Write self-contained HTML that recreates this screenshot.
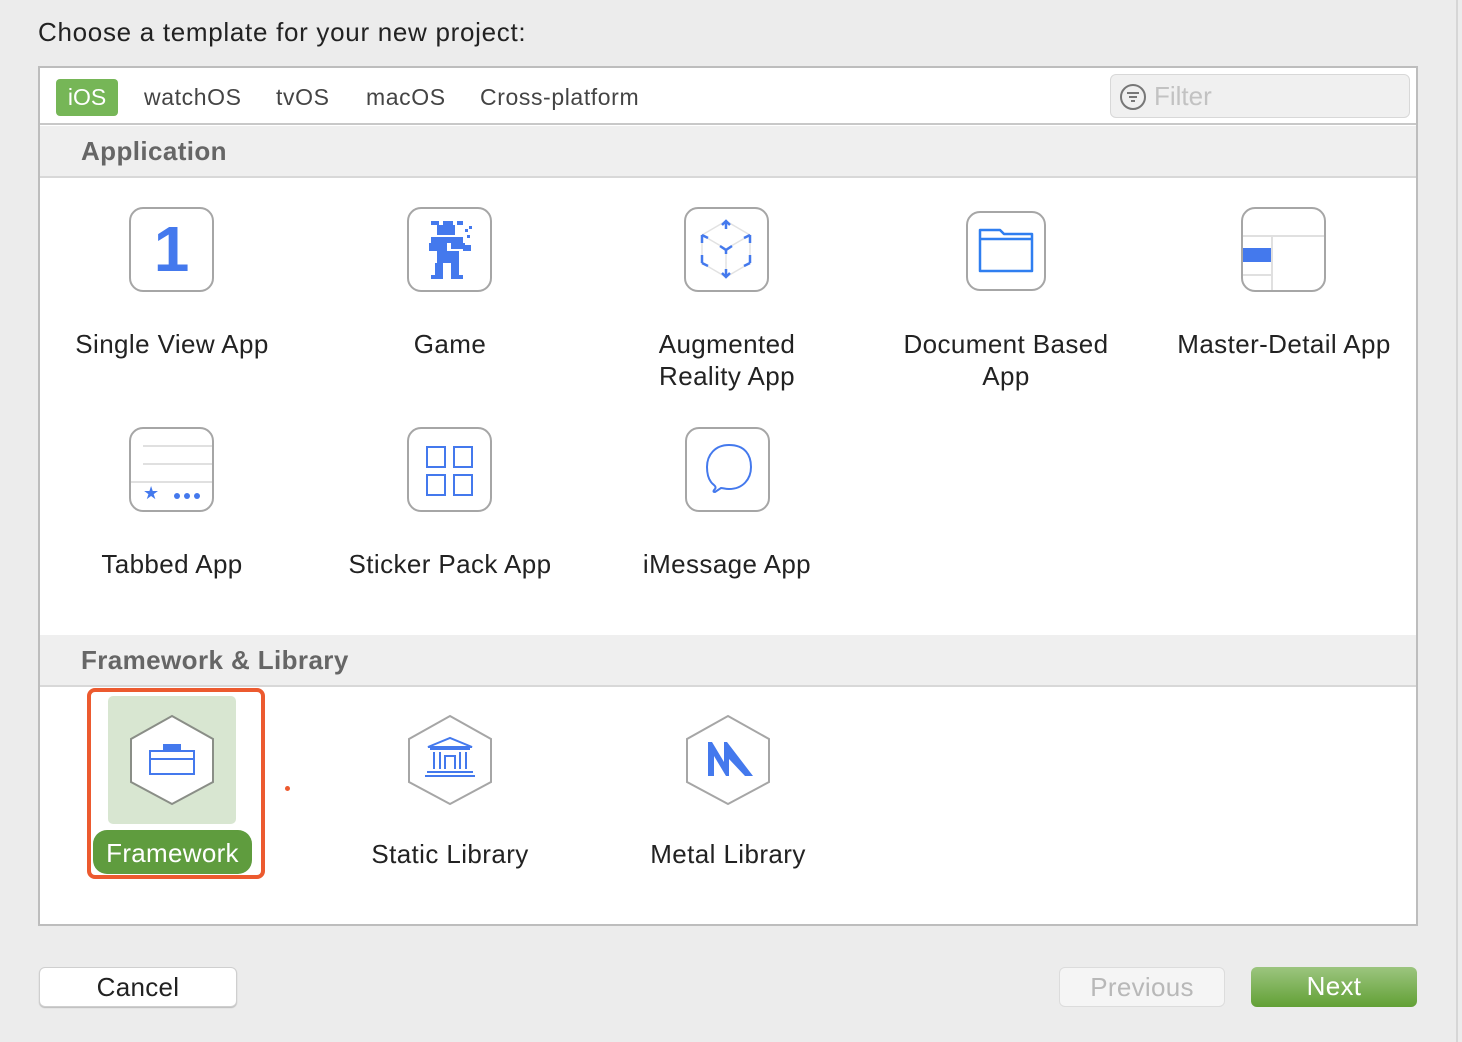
<!DOCTYPE html>
<html><head><meta charset="utf-8">
<style>
*{box-sizing:border-box;margin:0;padding:0}
body{width:1462px;height:1042px;background:#ececec;font-family:"Liberation Sans",sans-serif;position:relative;overflow:hidden;color:#222}
.abs{position:absolute}
.title{left:38px;top:17px;font-size:26px;letter-spacing:0.7px;color:#222}
.panel{left:38px;top:66px;width:1380px;height:860px;border:2px solid #bdbdbd;background:#fff}
.tabs{left:0;top:0;width:1376px;height:57px;border-bottom:2px solid #c8c8c8;background:#fff}
.tab{top:11px;height:37px;line-height:37px;font-size:23px;letter-spacing:0.6px;color:#444}
.hdr{left:0;width:1376px;height:52px;background:#efefef;border-bottom:2px solid #d8d8d8;font-size:26px;letter-spacing:0.4px;font-weight:bold;color:#666;padding-left:41px;line-height:50px}
.ico{width:85px;height:85px;border:2.5px solid #a6a6a6;border-radius:14px;background:#fff;overflow:hidden}
.lbl{width:260px;text-align:center;font-size:26px;letter-spacing:0.4px;line-height:32px;color:#222}
.btn{height:40px;border-radius:6px;font-size:26px;letter-spacing:0.3px;text-align:center;line-height:38px}
</style></head><body>
<div class="abs" style="left:1456px;top:0;width:2px;height:1042px;background:#d6d6d6"></div>
<div class="abs title">Choose a template for your new project:</div>
<div class="abs panel">
 <div class="abs tabs">
  <div class="abs tab" style="left:16px;width:62px;background:#76b657;color:#fff;border-radius:4px;text-align:center;letter-spacing:0">iOS</div>
  <div class="abs tab" style="left:104px">watchOS</div>
  <div class="abs tab" style="left:236px">tvOS</div>
  <div class="abs tab" style="left:326px">macOS</div>
  <div class="abs tab" style="left:440px">Cross-platform</div>
  <div class="abs" style="left:1070px;top:6px;width:300px;height:44px;background:#f0f0f0;border:1.5px solid #d8d8d8;border-radius:6px">
   <svg class="abs" style="left:8px;top:8px" width="28" height="28" viewBox="0 0 28 28"><circle cx="14" cy="14" r="12" fill="none" stroke="#777" stroke-width="2"/><path d="M8 10h12M10 14h8M12 18h4" stroke="#777" stroke-width="2"/></svg>
   <div class="abs" style="left:43px;top:6px;font-size:26px;color:#c2c2c2">Filter</div>
  </div>
 </div>
 <div class="abs hdr" style="top:58px">Application</div>
 <div class="abs hdr" style="top:567px">Framework &amp; Library</div>
</div>

<!-- row 1 icons -->
<div class="abs ico" style="left:129px;top:207px"><div style="font-size:64px;font-weight:bold;color:#4479ed;text-align:center;line-height:80px">1</div></div>
<div class="abs ico" style="left:407px;top:207px">
 <svg width="80" height="80" viewBox="0 0 80 80"><g fill="#4479ed">
 <rect x="22" y="12" width="8" height="4"/><rect x="34" y="12" width="10" height="4"/><rect x="48" y="12" width="6" height="4"/>
 <rect x="28" y="16" width="18" height="10"/><rect x="56" y="20" width="3" height="3"/><rect x="60" y="17" width="3" height="3"/><rect x="58" y="26" width="3" height="3"/>
 <rect x="22" y="28" width="32" height="6"/><rect x="20" y="34" width="18" height="8"/><rect x="42" y="34" width="14" height="6"/><rect x="54" y="36" width="8" height="6"/>
 <rect x="28" y="42" width="22" height="12"/><rect x="26" y="54" width="8" height="12"/><rect x="42" y="54" width="8" height="12"/>
 <rect x="22" y="66" width="12" height="4"/><rect x="42" y="66" width="12" height="4"/></g></svg>
</div>
<div class="abs ico" style="left:684px;top:207px">
 <svg width="80" height="80" viewBox="0 0 80 80"><g stroke="#e2e2e2" stroke-width="1.5" fill="none"><path d="M40 12L64 26V54L40 68L16 54V26Z M40 40V68 M40 40L16 26 M40 40L64 26"/></g>
 <g stroke="#4479ed" stroke-width="2.5" fill="none"><path d="M40 12v8M36 16l4-4 4 4M16 26v8M16 26l6 3M64 26v8M64 26l-6 3M16 54v-8M16 54l6 3M64 54v-8M64 54l-6 3M40 68v-8M36 64l4 4 4-4M34 37l6 4 6-4M40 41v4"/></g></svg>
</div>
<div class="abs ico" style="left:966px;top:211px;width:80px;height:80px">
 <svg width="76" height="76" viewBox="0 0 76 76"><path d="M12 17h20l4 4h28v37H12Z M12 26h52" fill="none" stroke="#2f7ef0" stroke-width="2.5" stroke-linejoin="round"/></svg>
</div>
<div class="abs ico" style="left:1241px;top:207px">
 <div class="abs" style="left:0;top:26px;width:85px;height:2px;background:#e0e0e0"></div>
 <div class="abs" style="left:28px;top:26px;width:2px;height:60px;background:#e0e0e0"></div>
 <div class="abs" style="left:0;top:39px;width:28px;height:14px;background:#4479ed"></div>
 <div class="abs" style="left:0;top:65px;width:28px;height:2px;background:#e0e0e0"></div>
</div>
<div class="abs lbl" style="left:42px;top:328px">Single View App</div>
<div class="abs lbl" style="left:320px;top:328px">Game</div>
<div class="abs lbl" style="left:597px;top:328px">Augmented<br>Reality App</div>
<div class="abs lbl" style="left:876px;top:328px">Document Based<br>App</div>
<div class="abs lbl" style="left:1154px;top:328px">Master-Detail App</div>

<!-- row 2 -->
<div class="abs ico" style="left:129px;top:427px">
 <div class="abs" style="left:12px;top:16px;width:70px;height:2px;background:#e0e0e0"></div>
 <div class="abs" style="left:12px;top:34px;width:70px;height:2px;background:#e0e0e0"></div>
 <div class="abs" style="left:0;top:52px;width:85px;height:2px;background:#e0e0e0"></div>
 <div class="abs" style="left:12px;top:54px;font-size:18px;color:#4479ed">★</div>
 <svg class="abs" style="left:42px;top:62px" width="30" height="10"><circle cx="4" cy="5" r="3" fill="#4479ed"/><circle cx="14" cy="5" r="3" fill="#4479ed"/><circle cx="24" cy="5" r="3" fill="#4479ed"/></svg>
</div>
<div class="abs ico" style="left:407px;top:427px">
 <svg width="80" height="80" viewBox="0 0 80 80"><g fill="none" stroke="#4479ed" stroke-width="2"><rect x="18" y="18" width="18" height="20"/><rect x="45" y="18" width="18" height="20"/><rect x="18" y="46" width="18" height="20"/><rect x="45" y="46" width="18" height="20"/></g></svg>
</div>
<div class="abs ico" style="left:685px;top:427px">
 <svg width="80" height="80" viewBox="0 0 80 80"><path d="M42 16c16 0 22 10 22 22s-8 22-22 22c-4 0-6-1-8-1l-6 4c-2 0-2-1 0-3 2-3-2-4-4-7-3-4-4-9-4-15 0-12 8-22 22-22Z" fill="none" stroke="#4479ed" stroke-width="2"/></svg>
</div>
<div class="abs lbl" style="left:42px;top:548px">Tabbed App</div>
<div class="abs lbl" style="left:320px;top:548px">Sticker Pack App</div>
<div class="abs lbl" style="left:597px;top:548px">iMessage App</div>

<!-- framework row -->
<div class="abs" style="left:87px;top:688px;width:178px;height:191px;border:4px solid #ec5a2f;border-radius:8px"></div>
<div class="abs" style="left:108px;top:696px;width:128px;height:128px;background:#d8e6d1;border-radius:5px"></div>
<svg class="abs" style="left:129px;top:714px" width="86" height="92" viewBox="0 0 86 92"><path d="M43 2L84 25V68L43 90L2 68V25Z" fill="#fff" stroke="#8a8e87" stroke-width="2"/>
<g fill="none" stroke="#4479ed" stroke-width="2"><rect x="21" y="37" width="44" height="23"/><path d="M21 45h44"/><rect x="35" y="31" width="16" height="6" fill="#4479ed"/></g></svg>
<div class="abs" style="left:93px;top:830px;width:159px;height:44px;background:#5f9c3e;border-radius:14px;color:#fff;font-size:26px;letter-spacing:0.3px;text-align:center;line-height:46px">Framework</div>
<div class="abs" style="left:285px;top:786px;width:5px;height:5px;border-radius:50%;background:#ec5a2f"></div>

<svg class="abs" style="left:407px;top:714px" width="86" height="92" viewBox="0 0 86 92"><path d="M43 2L84 25V68L43 90L2 68V25Z" fill="#fff" stroke="#a6a6a6" stroke-width="2"/>
<g fill="none" stroke="#4479ed" stroke-width="2"><path d="M21 33L43 24L65 33Z M23 35h40M27 38v17M59 38v17M33 38v17M53 38v17M38 55V42h10v13M20 58h46M18 62h50"/></g></svg>
<svg class="abs" style="left:685px;top:714px" width="86" height="92" viewBox="0 0 86 92"><path d="M43 2L84 25V68L43 90L2 68V25Z" fill="#fff" stroke="#a6a6a6" stroke-width="2"/>
<path d="M23 28h4l12 20V28h3l26 34h-8L44 45v17h-3L29 42v20h-6Z" fill="#4479ed"/></svg>
<div class="abs lbl" style="left:320px;top:838px">Static Library</div>
<div class="abs lbl" style="left:598px;top:838px">Metal Library</div>

<!-- buttons -->
<div class="abs btn" style="left:39px;top:967px;width:198px;background:#fff;border:1px solid #cfcfcf;box-shadow:0 1px 1px #bbb;color:#222">Cancel</div>
<div class="abs btn" style="left:1059px;top:967px;width:166px;background:#f5f5f5;border:1px solid #dcdcdc;color:#b8b8b8">Previous</div>
<div class="abs btn" style="left:1251px;top:967px;width:166px;background:linear-gradient(#9cc57f,#62a035);color:#fff">Next</div>
</body></html>
